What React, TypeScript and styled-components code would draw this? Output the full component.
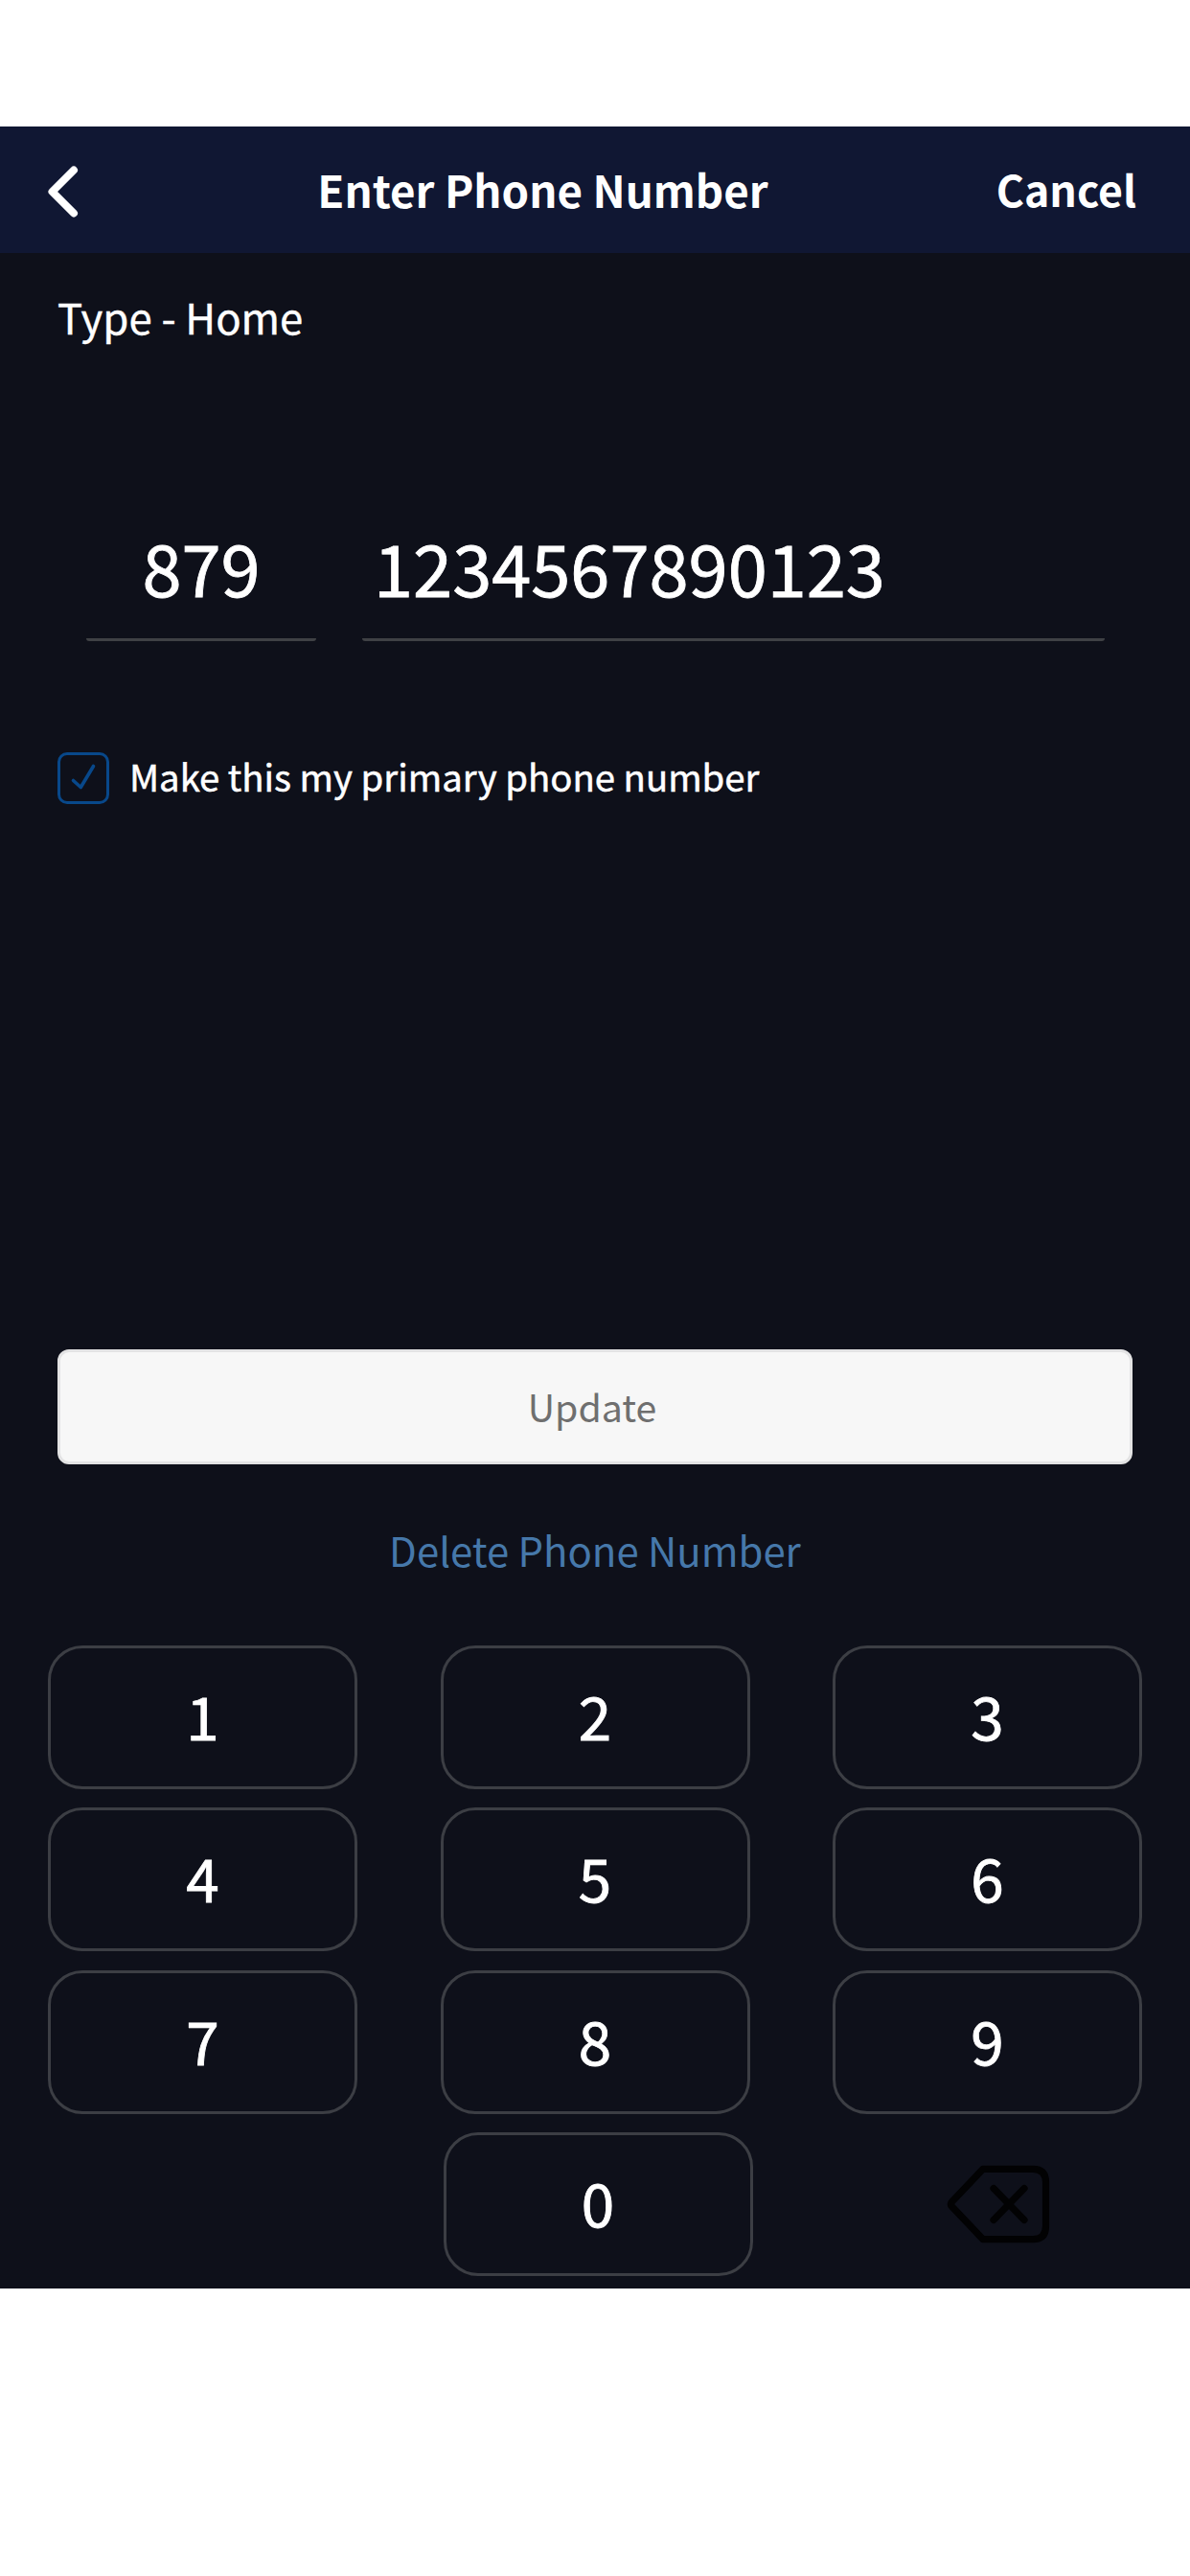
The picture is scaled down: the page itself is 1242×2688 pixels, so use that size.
import React, { useState } from "react";
import styled, { createGlobalStyle } from "styled-components";

const GlobalStyle = createGlobalStyle`
  * { box-sizing: border-box; }
  body { margin: 0; background: #ffffff; }
  button, input { font: inherit; color: inherit; margin: 0; }
`;

const Screen = styled.div`
  width: 1242px;
  height: 2688px;
  padding: 132px 0 300px;
  background: #ffffff;
  font-family: "Noto Sans CJK SC", "Noto Sans", sans-serif;
  color: #ffffff;
`;

const Page = styled.main`
  display: flex;
  flex-direction: column;
  height: 2256px;
  background: #0e101a;
`;

const Header = styled.header`
  display: grid;
  grid-template-columns: 200px 1fr 300px;
  align-items: center;
  flex: none;
  height: 132px;
  padding: 0 56px 2px 47px;
  background: #101733;
  line-height: 64px;
`;

const HeaderButton = styled.button<{ $end?: boolean }>`
  display: flex;
  justify-content: ${(p) => (p.$end ? "flex-end" : "flex-start")};
  padding: ${(p) => (p.$end ? "0 0 1px" : "5px 0 0")};
  border: 0;
  background: none;
  font-size: 44.6px;
  font-weight: 700;
`;

const Title = styled.h1`
  margin: 0;
  font-size: 45.7px;
  font-weight: 700;
  text-align: center;
  white-space: nowrap;
`;

const TypeLabel = styled.p`
  margin: 36px 0 0;
  padding-left: 60px;
  font-size: 43.7px;
  line-height: 60px;
  -webkit-text-stroke: 0.4px currentColor;
`;

const Fields = styled.div`
  display: grid;
  grid-template-columns: 240px 775px;
  gap: 48px;
  margin: 181px 0 0 90px;
`;

const Field = styled.input<{ $center?: boolean }>`
  width: 100%;
  height: 128px;
  padding: ${(p) => (p.$center ? "0 0 26px" : "0 0 26px 12px")};
  border: 0;
  border-bottom: 3px solid #3f4145;
  border-radius: 3px;
  outline: 0;
  background: none;
  font-size: 74px;
  line-height: 97px;
  text-align: ${(p) => (p.$center ? "center" : "left")};
  -webkit-text-stroke: 0.8px currentColor;
`;

const PrimaryOption = styled.button`
  display: flex;
  align-items: center;
  gap: 20px;
  height: 54px;
  margin: 116px 0 0 60px;
  padding: 0;
  border: 0;
  background: none;
  text-align: left;
`;

const CheckBox = styled.span`
  display: flex;
  flex: none;
  width: 54px;
  height: 54px;
  border: 3px solid #08488a;
  border-radius: 10px;
  color: #08488a;
`;

const OptionText = styled.span`
  padding: 0 0 4px 1px;
  font-size: 38.3px;
  line-height: 50px;
  white-space: nowrap;
  -webkit-text-stroke: 0.5px currentColor;
`;

const UpdateButton = styled.button`
  flex: none;
  height: 120px;
  margin: 569px 60px 0;
  padding: 0 6px 2px 0;
  border: 3px solid #e3e3e4;
  border-radius: 12px;
  background: #f7f7f7;
  color: #6f6f6f;
  font-size: 39.3px;
  line-height: 56px;
`;

const DeleteButton = styled.button`
  align-self: center;
  height: 60px;
  margin-top: 59px;
  padding: 0;
  border: 0;
  background: none;
  color: #4678aa;
  font-size: 41.9px;
  line-height: 60px;
`;

const Keypad = styled.div`
  display: grid;
  grid-template-columns: repeat(3, 323px);
  grid-auto-rows: 150px;
  justify-content: space-between;
  row-gap: 19.3px;
  margin: 70px 50px 0;
`;

const Key = styled.button<{ $zero?: boolean }>`
  grid-column: ${(p) => (p.$zero ? 2 : "auto")};
  margin-left: ${(p) => (p.$zero ? "3px" : 0)};
  margin-right: ${(p) => (p.$zero ? "-3px" : 0)};
  padding: 0 0 6px;
  border: 3px solid #3c3e44;
  border-radius: 36px;
  background: none;
  font-size: 62px;
  line-height: 80px;
  -webkit-text-stroke: 0.8px currentColor;
`;

const BackspaceKey = styled.button`
  display: flex;
  align-items: center;
  justify-content: center;
  padding: 0 0 0 22px;
  border: 0;
  background: none;
  color: #020203;
`;

const Icon = styled.svg`
  display: block;
  flex: none;
  fill: none;
  stroke: currentColor;
  stroke-linecap: round;
  stroke-linejoin: round;
`;

const DIGITS = ["1", "2", "3", "4", "5", "6", "7", "8", "9"];

export default function App() {
  const [code, setCode] = useState("879");
  const [phone, setPhone] = useState("1234567890123");
  const [primary, setPrimary] = useState(true);
  const press = (digit: string) => setPhone((value) => value + digit);

  return (
    <Screen>
      <GlobalStyle />
      <Page>
        <Header>
          <HeaderButton aria-label="Back">
            <Icon width="36" height="56" viewBox="0 0 36 56" strokeWidth="8">
              <path d="M30 5.5 L7.5 28 L30 50.5" />
            </Icon>
          </HeaderButton>
          <Title>Enter Phone Number</Title>
          <HeaderButton $end>Cancel</HeaderButton>
        </Header>

        <TypeLabel>Type - Home</TypeLabel>

        <Fields>
          <Field $center value={code} onChange={(e) => setCode(e.target.value)} />
          <Field value={phone} onChange={(e) => setPhone(e.target.value)} />
        </Fields>

        <PrimaryOption onClick={() => setPrimary(!primary)}>
          <CheckBox>
            {primary && (
              <Icon width="48" height="48" viewBox="0 0 48 48" strokeWidth="3.6">
                <path d="M13.5 26.5 L21.3 33.5 L34.5 11.5" />
              </Icon>
            )}
          </CheckBox>
          <OptionText>Make this my primary phone number</OptionText>
        </PrimaryOption>

        <UpdateButton>Update</UpdateButton>
        <DeleteButton>Delete Phone Number</DeleteButton>

        <Keypad>
          {DIGITS.map((digit) => (
            <Key key={digit} onClick={() => press(digit)}>
              {digit}
            </Key>
          ))}
          <Key $zero onClick={() => press("0")}>
            0
          </Key>
          <BackspaceKey
            aria-label="Delete digit"
            onClick={() => setPhone((value) => value.slice(0, -1))}
          >
            <Icon width="110" height="82" viewBox="0 0 110 82" strokeWidth="7.2">
              <path d="M39 4.3 H91 Q104.5 4.3 104.5 18 V64 Q104.5 77.7 91 77.7 H39 L6.5 43.5 Q4 41 6.5 38.5 Z" />
              <path d="M50 24.5 L82 57.5 M82 24.5 L50 57.5" />
            </Icon>
          </BackspaceKey>
        </Keypad>
      </Page>
    </Screen>
  );
}
